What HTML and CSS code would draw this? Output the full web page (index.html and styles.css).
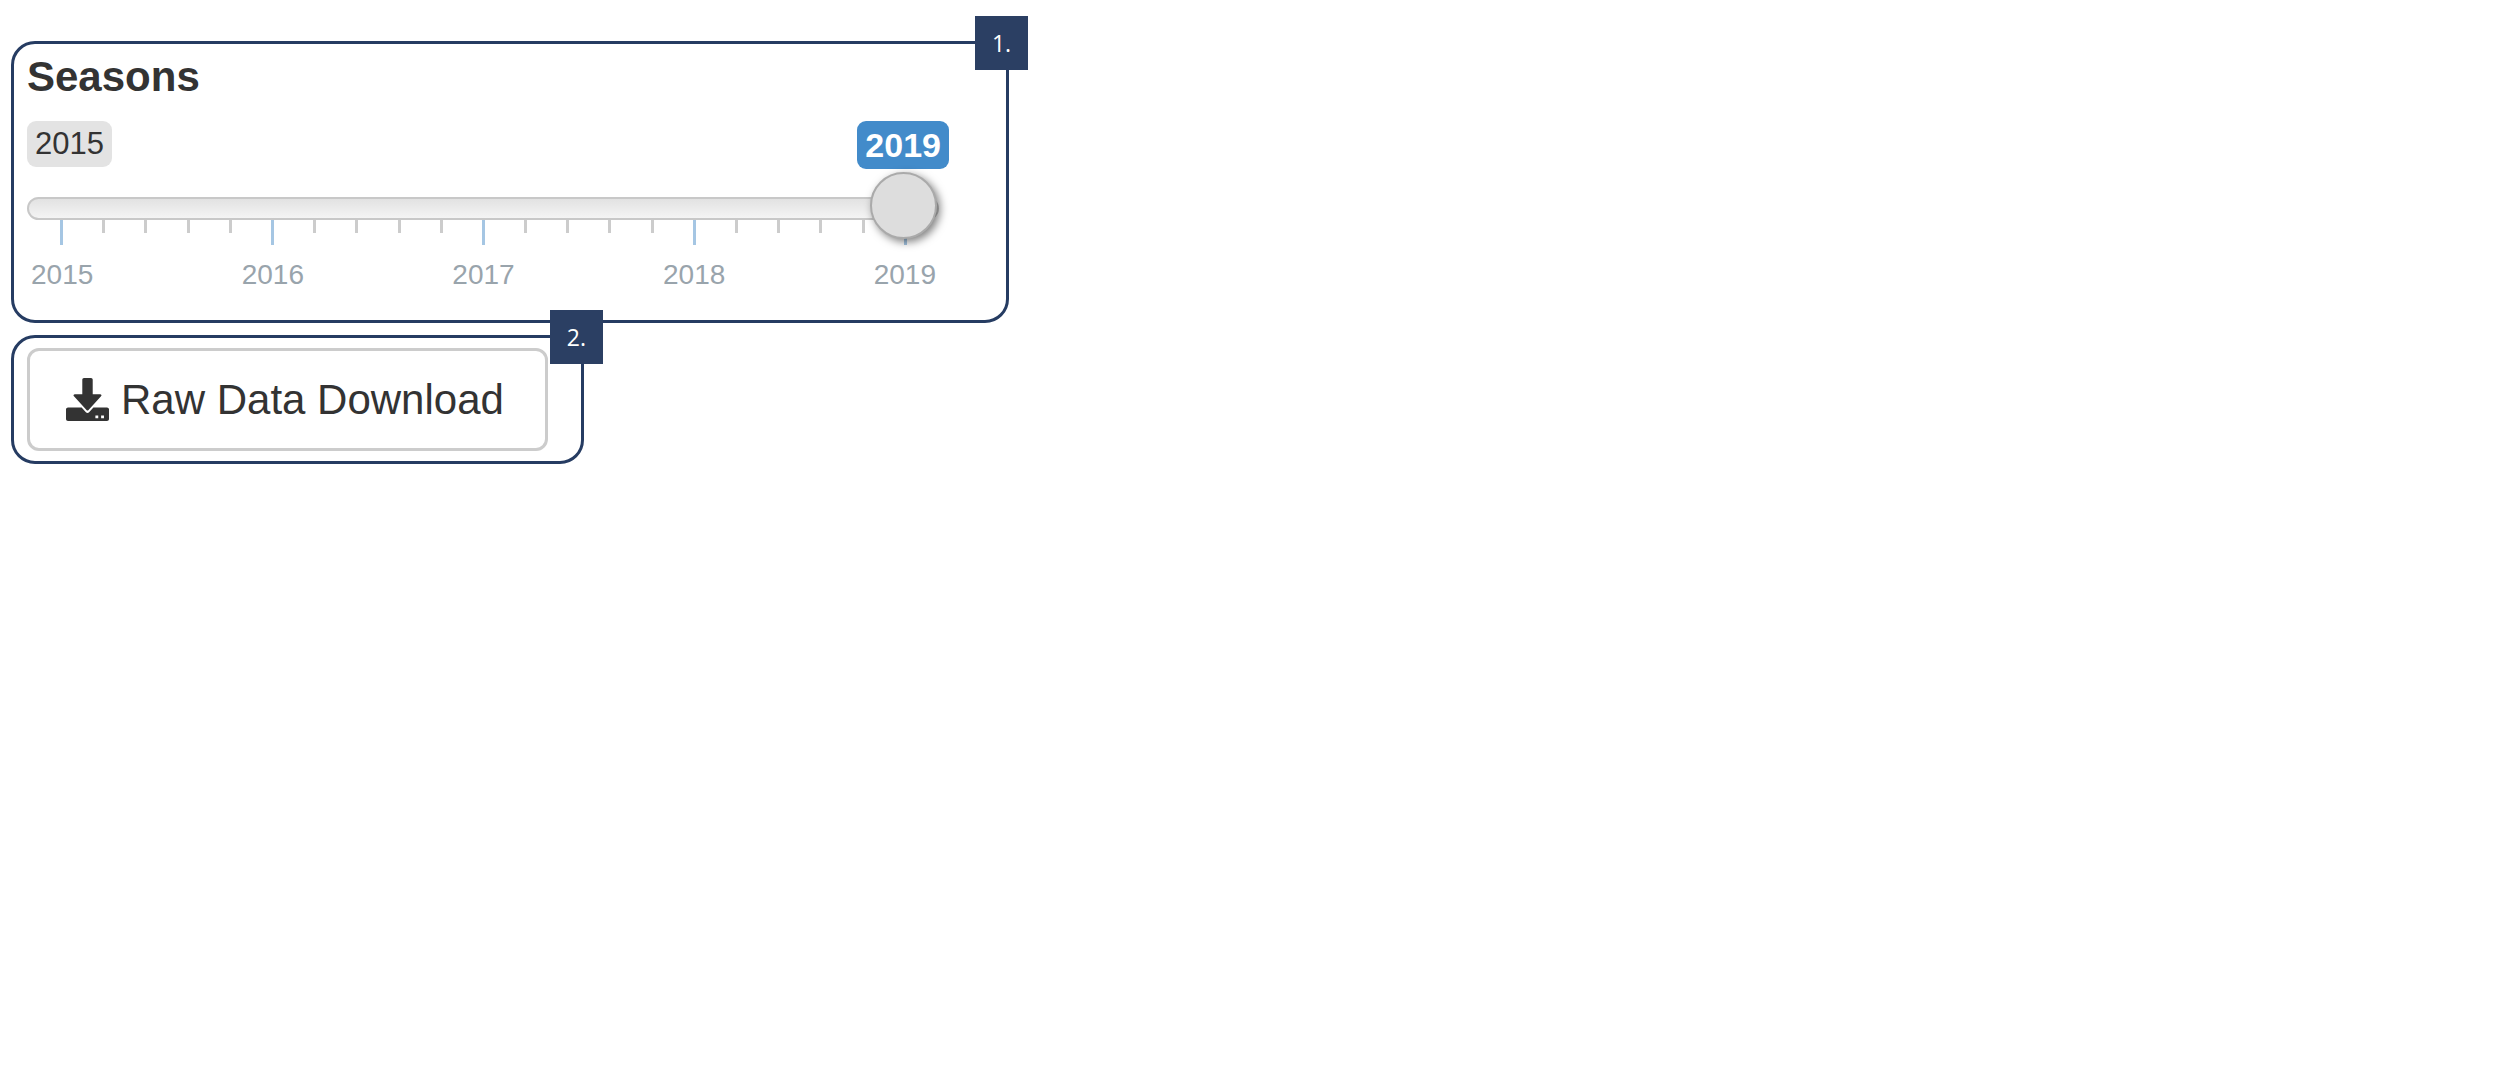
FILE: index.html
```html
<!DOCTYPE html>
<html lang="en">
<head>
  <meta charset="UTF-8">
  <title>Seasons</title>
  <link rel="stylesheet" href="styles.css">
</head>

<body>
<div id="container">

  <div class="panel seasons">
    <span class="badge">1.</span>
    <label class="title" for="season">Seasons</label>
    <div class="slider">
      <div class="values">
        <span class="min">2015</span>
        <output class="single" for="season">2019</output>
      </div>
      <div class="scale">
        <input type="range" id="season" min="2015" max="2019" step="1" value="2019">
        <div class="ticks">
          <i class="big"></i><i></i><i></i><i></i><i></i>
          <i class="big"></i><i></i><i></i><i></i><i></i>
          <i class="big"></i><i></i><i></i><i></i><i></i>
          <i class="big"></i><i></i><i></i><i></i><i></i>
          <i class="big"></i>
        </div>
        <div class="years">
          <span>2015</span><span>2016</span><span>2017</span><span>2018</span><span>2019</span>
        </div>
      </div>
    </div>
  </div>

  <div class="panel download">
    <span class="badge">2.</span>
    <button type="button" class="btn">
      <svg class="icon" viewBox="0 0 512 512" aria-hidden="true">
        <path d="M214 0h84c11 0 20 9 20 20v172h88c16 0 22 14 11 25L268 382c-7 8-17 8-24 0L95 217c-11-11-5-25 11-25h88V20c0-11 9-20 20-20z"/>
        <path fill-rule="evenodd" d="M24 352h162l51 55c11 12 27 12 38 0l51-55h162c13 0 24 11 24 24v112c0 13-11 24-24 24H24c-13 0-24-11-24-24V376c0-13 11-24 24-24zM350 446v34h34v-34zM418 446v34h34v-34z"/>
      </svg>
      Raw Data Download
    </button>
  </div>

</div>
</body>
</html>
```
FILE: styles.css
```css
* {
  box-sizing: border-box;
}

body {
  margin: 0;
  background: #fff;
  color: #333;
  font-family: "Liberation Sans", Arial, sans-serif;
}

#container {
  display: flex;
  flex-direction: column;
  align-items: flex-start;
  gap: 12px;
  padding: 41px 24px 24px 11px;
}

.panel {
  position: relative;
  border: 3px solid #263c62;
  border-radius: 24px;
}

.badge {
  position: absolute;
  z-index: 2;
  top: -28px;
  right: -22px;
  width: 53px;
  height: 54px;
  background: #2b3f63;
  color: #fff;
  font: 23px/54px "Open Sans", sans-serif;
  text-align: center;
}

/* Seasons slider */
.seasons {
  width: 100%;
  max-width: 998px;
  padding: 12px 57px 31px 13px;
}

.title {
  display: block;
  margin-bottom: 23px;
  font-size: 42px;
  font-weight: bold;
  line-height: 42px;
}

.values {
  display: flex;
  justify-content: space-between;
  align-items: flex-start;
}

.min,
.single {
  padding: 0 8px;
  border-radius: 9px;
}

.min {
  background: #e3e3e3;
  font-size: 31px;
  line-height: 46px;
}

.single {
  background: #428bca;
  color: #fff;
  font-size: 34px;
  font-weight: bold;
  line-height: 48px;
}

.scale {
  margin: 28px 10px 0 0;
}

input[type=range] {
  -webkit-appearance: none;
  appearance: none;
  display: block;
  position: relative;
  z-index: 1;
  width: 100%;
  height: 23px;
  margin: 0;
  background: none;
  cursor: pointer;
}

input[type=range]::-webkit-slider-runnable-track {
  height: 23px;
  border: 2px solid #c8c8c8;
  border-radius: 12px;
  background: linear-gradient(#e2e2e2, #f4f4f4);
}

input[type=range]::-webkit-slider-thumb {
  -webkit-appearance: none;
  width: 67px;
  height: 67px;
  margin-top: -27px;
  border: 2px solid #aaa;
  border-radius: 50%;
  background: #ddd;
  box-shadow: 3px 3px 9px rgba(0, 0, 0, 0.5);
}

.ticks {
  display: flex;
  justify-content: space-between;
  height: 25px;
  margin: 0 32px 0 33px;
}

.ticks i {
  width: 3px;
  height: 13px;
  background: #ccc;
}

.ticks .big {
  height: 25px;
  background: #a5c6e3;
}

.years {
  display: flex;
  justify-content: space-between;
  margin: 16px 3px 0 4px;
  color: #99a4ac;
  font-size: 28px;
  line-height: 28px;
}

/* Download button */
.download {
  padding: 10px 33px 10px 13px;
}

.btn {
  display: flex;
  align-items: center;
  gap: 12px;
  height: 103px;
  padding: 0 41px 0 36px;
  border: 3px solid #ccc;
  border-radius: 12px;
  background: #fff;
  color: #333;
  font-family: inherit;
  font-size: 42px;
  cursor: pointer;
}

.icon {
  width: 43px;
  height: 43px;
  fill: #333;
}
```
